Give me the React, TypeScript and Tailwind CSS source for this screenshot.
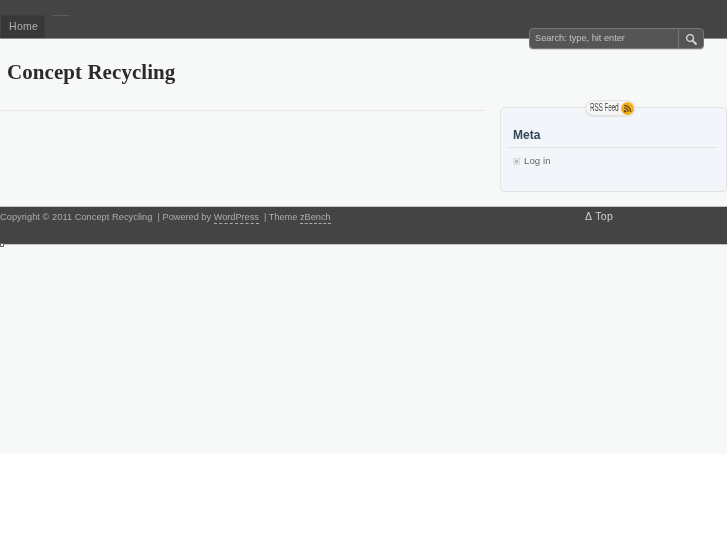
import React from "react";

const sans = "font-['Liberation_Sans',Arial,sans-serif]";

export default function App() {
  return (
    <div className={`relative h-[545px] w-[727px] overflow-hidden bg-white ${sans}`}>
      <div className="flex h-[454px] flex-col bg-[#f7f8f8]">
        {/* Header */}
        <header className="relative h-[39px] shrink-0 border-b border-[#8a8a8a] bg-[#444444]">
          <nav className="flex h-full items-end pl-px">
            <a className="flex h-[23px] w-[44px] items-center border-r border-t border-[#3d3d3d] bg-[#383838] pl-[8px] text-[10.5px] tracking-[0.3px] text-[#b0b0b0]">
              <span className="[will-change:transform]">Home</span>
            </a>
            <span className="mb-[22px] ml-[7px] h-px w-[17px] bg-[#5c5c5c]" />
          </nav>
          <div className="absolute left-[529px] top-[28px] flex h-[21px] w-[175px] rounded-[4px] border border-[#777777] bg-[#555555] shadow-[0_1px_1px_rgba(0,0,0,0.15)]">
            <div className="flex flex-1 items-center pl-[5px] text-[9.2px] text-[#c4c4c4]">
              <span className="[will-change:transform]">Search: type, hit enter</span>
            </div>
            <div className="flex w-[25px] items-center justify-center border-l border-[#777777]">
              <svg width="12" height="12" viewBox="0 0 12 12" fill="none">
                <circle cx="5" cy="5" r="3.4" stroke="#d8d8d8" strokeWidth="1.3" />
                <path d="M7.6 7.6L11 11" stroke="#d8d8d8" strokeWidth="1.8" strokeLinecap="round" />
              </svg>
            </div>
          </div>
        </header>

        {/* Content */}
        <div className="flex h-[167px] shrink-0">
          <main className="w-[485px] shrink-0">
            <div className="h-[72px] border-b border-[#e8e8e8] pl-[7px] pt-[20px] font-['Liberation_Serif',serif] text-[21px] leading-[26px] font-bold tracking-[0.06px] text-[#2b2b2b]">
              <span className="inline-block [will-change:transform]">Concept Recycling</span>
            </div>
          </main>
          <aside className="relative ml-[15px] mt-[68px] h-[85px] w-[227px] rounded-[5px] border border-[#e2e2e2] bg-[#f2f5f9]">
            <div className="absolute left-[84px] top-[-8px] h-[16px] w-[50px] rounded-full border border-[#e4e4e4] bg-[#f5f5f5] shadow-[0_1px_1px_rgba(0,0,0,0.08)]">
              <span className="absolute left-[4px] top-0 origin-left text-[10px] leading-[14px] whitespace-nowrap text-[#444444] [transform:scaleX(0.62)] [will-change:transform]">RSS Feed</span>
              <svg className="absolute left-[35px] top-[1px]" width="13" height="13" viewBox="0 0 13 13">
                <circle cx="6.5" cy="6.5" r="6.5" fill="#f5ae1b" />
                <circle cx="4" cy="9.2" r="1.2" fill="#6b4a10" />
                <path d="M3 5.8a4.2 4.2 0 0 1 4.2 4.2M3 3.3a6.7 6.7 0 0 1 6.7 6.7" stroke="#6b4a10" strokeWidth="1.3" fill="none" />
              </svg>
            </div>
            <div className="ml-[7px] mr-[9px] mt-[19px] border-b border-[#e4e4e4] pb-[4px] pl-[5px] text-[12px] leading-[16px] font-bold text-[#33475b]">
              <span className="inline-block [will-change:transform]">Meta</span>
            </div>
            <div className="mt-[6px] flex items-center pl-[12px] text-[9.6px] leading-[14px] tracking-[0.1px] text-[#666666]">
              <span className="mr-[4px] flex h-[7px] w-[7px] items-center justify-center border border-[#dddddd] bg-[#e8e8e8]">
                <span className="h-[3px] w-[3px] bg-[#bbbbbb]" />
              </span>
              <span className="[will-change:transform]">Log in</span>
            </div>
          </aside>
        </div>

        {/* Footer */}
        <footer className="relative h-[39px] shrink-0 border-t border-b border-[#c4c4c4] bg-[#444444] text-[9.2px] leading-[13px] text-[#adadad]">
          <div className="pt-[4px] whitespace-pre [will-change:transform]">
            <span className="tracking-[0.07px]">Copyright © 2011 Concept Recycling</span>
            {"  "}| Powered by{" "}
            <a className="border-b border-dashed border-[#adadad] pb-[1px]">WordPress</a>
            {"  "}| Theme{" "}
            <a className="border-b border-dashed border-[#adadad] pb-[1px]">zBench</a>
          </div>
          <a className="absolute left-[585px] top-[3px] text-[10.5px] tracking-[0.4px] text-[#d0d0d0] [will-change:transform]">Δ Top</a>
          <span className="absolute left-0 top-[36px] h-[4px] w-[4px] border border-[#666666] bg-[#eeeeee]" />
        </footer>
      </div>
    </div>
  );
}
